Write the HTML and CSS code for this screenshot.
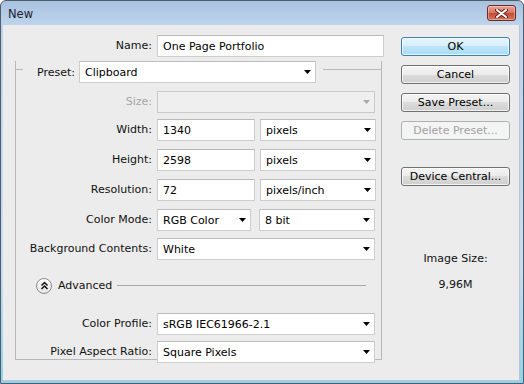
FILE: index.html
```html
<!DOCTYPE html>
<html>
<head>
    <title>New</title>
    <meta charset="UTF-8">
    <link rel="stylesheet" href="styles.css">
</head>
<body>
    <div class="window">
        <div class="titlebar">
            <span class="title">New</span>
            <span class="close">
                <svg width="13" height="9" viewBox="0 0 13 9">
                    <path d="M2 1 L11 8 M11 1 L2 8" stroke="#6b2418" stroke-width="4" stroke-linecap="round"/>
                    <path d="M2 1 L11 8 M11 1 L2 8" stroke="#fff" stroke-width="2" stroke-linecap="round"/>
                </svg>
            </span>
        </div>
        <div class="dialog">
            <div class="main">
                <div class="row name-row">
                    <label class="outer">Name:</label>
                    <input class="field name" type="text" value="One Page Portfolio">
                </div>
                <div class="group">
                    <div class="group-head">
                        <span class="rule short"></span>
                        <label>Preset:</label>
                        <div class="select preset"><span>Clipboard</span><i class="arrow"></i></div>
                        <span class="rule long"></span>
                    </div>
                    <div class="row r-size">
                        <label class="off">Size:</label>
                        <div class="select full disabled"><span></span><i class="arrow"></i></div>
                    </div>
                    <div class="row r-width">
                        <label>Width:</label>
                        <input class="field num" type="text" value="1340">
                        <div class="select unit"><span>pixels</span><i class="arrow"></i></div>
                    </div>
                    <div class="row r-height">
                        <label>Height:</label>
                        <input class="field num" type="text" value="2598">
                        <div class="select unit"><span>pixels</span><i class="arrow"></i></div>
                    </div>
                    <div class="row r-res">
                        <label>Resolution:</label>
                        <input class="field num" type="text" value="72">
                        <div class="select unit"><span>pixels/inch</span><i class="arrow"></i></div>
                    </div>
                    <div class="row r-mode">
                        <label>Color Mode:</label>
                        <div class="select mode"><span>RGB Color</span><i class="arrow"></i></div>
                        <div class="select unit"><span>8 bit</span><i class="arrow"></i></div>
                    </div>
                    <div class="row r-bg">
                        <label>Background Contents:</label>
                        <div class="select full"><span>White</span><i class="arrow"></i></div>
                    </div>
                    <div class="advanced">
                        <span class="toggle">
                            <svg width="9" height="9" viewBox="0 0 9 9">
                                <path d="M1.5 4.5 L4.5 1.5 L7.5 4.5 M1.5 8 L4.5 5 L7.5 8" fill="none" stroke="#111" stroke-width="1.5"/>
                            </svg>
                        </span>
                        <span class="adv-label">Advanced</span>
                        <span class="adv-rule"></span>
                    </div>
                    <div class="row r-profile">
                        <label>Color Profile:</label>
                        <div class="select full"><span>sRGB IEC61966-2.1</span><i class="arrow"></i></div>
                    </div>
                    <div class="row r-ratio">
                        <label>Pixel Aspect Ratio:</label>
                        <div class="select full"><span>Square Pixels</span><i class="arrow"></i></div>
                    </div>
                </div>
            </div>
            <div class="side">
                <button class="btn default">OK</button>
                <button class="btn">Cancel</button>
                <button class="btn">Save Preset...</button>
                <button class="btn" disabled>Delete Preset...</button>
                <button class="btn device">Device Central...</button>
                <div class="size-label">Image Size:</div>
                <div class="size-value">9,96M</div>
            </div>
        </div>
    </div>
</body>
</html>
```

FILE: styles.css
```css
body {
    margin: 0;
    font-family: "DejaVu Sans", sans-serif;
    font-size: 11px;
    color: #111;
}
.window {
    width: 524px;
    height: 384px;
    box-sizing: border-box;
    border: 1px solid #4e5d6c;
    border-radius: 6px 6px 0 0;
    background: linear-gradient(to bottom, #a9c2df, #bed4ec 24px, #c9dcef 70%, #8fd3ea);
    display: flex;
    flex-direction: column;
}
.titlebar {
    height: 24px;
    display: flex;
    justify-content: space-between;
    align-items: flex-start;
    padding: 0 7px 0 7px;
}
.title {
    font-size: 11.5px;
    line-height: 26px;
    color: #1b2532;
}
.close {
    margin-top: 4px;
    width: 27px;
    height: 14px;
    border: 1px solid #6f2a20;
    border-radius: 3px;
    background: linear-gradient(to bottom, #e9a899, #d5705d 50%, #c24a33 50%, #d6735c);
    box-shadow: inset 0 0 0 1px rgba(255, 255, 255, 0.35);
    display: flex;
    align-items: center;
    justify-content: center;
}
.dialog {
    flex: 1;
    margin: 0 3px 2px 2px;
    background: #ececec;
    border-right: 1px solid #b9c6d3;
    border-bottom: 1px solid #b9c6d3;
    display: flex;
    padding: 10px 0 0 12px;
}
.main {
    width: 369px;
}
.row {
    display: flex;
    align-items: center;
    height: 22px;
}
.row label {
    width: 136px;
    margin-right: 5px;
    text-align: right;
    line-height: 22px;
}
.row label.outer {
    width: 137px;
}
.row label.off {
    color: #a6a6a6;
}
.field {
    box-sizing: border-box;
    height: 22px;
    border: 1px solid #cdcdcd;
    border-top-color: #b9b9b9;
    background: #fff;
    font-family: "DejaVu Sans", sans-serif;
    font-size: 11px;
    color: #000;
    padding: 0 5px;
    margin: 0;
    outline: none;
}
.field.name {
    width: 227px;
}
.field.num {
    width: 98px;
    margin-right: 5px;
}
.select {
    box-sizing: border-box;
    height: 22px;
    border: 1px solid #cdcdcd;
    border-top-color: #bdbdbd;
    background: #fff;
    display: flex;
    align-items: center;
    justify-content: space-between;
    padding: 0 4px 0 5px;
    color: #000;
}
.select.full { width: 218px; }
.select.unit { width: 116px; }
.select.mode { width: 94px; margin-right: 8px; }
.select.preset { width: 237px; }
.select.disabled {
    background: #efefef;
    border-color: #c9c9c9;
}
.arrow {
    width: 7px;
    height: 4px;
    background: #000;
    clip-path: polygon(0 0, 100% 0, 50% 100%);
}
.select.disabled .arrow {
    background: #a9a9a9;
}
.group {
    width: 367px;
    height: 299px;
    box-sizing: border-box;
    margin-top: 12px;
    border: 1px solid #b8b8b8;
    border-top: none;
}
.group-head {
    display: flex;
    align-items: center;
    height: 22px;
    margin-top: -8px;
}
.rule {
    align-self: flex-start;
    margin-top: 8px;
    border-top: 1px solid #b8b8b8;
    height: 0;
}
.rule.short {
    width: 7px;
    margin-right: 14px;
}
.rule.long {
    flex: 1;
    margin-left: 7px;
}
.group-head label {
    margin-right: 4px;
}
.r-size { margin-top: 8px; }
.r-width { margin-top: 6px; }
.r-height,
.r-res,
.r-mode { margin-top: 8px; }
.r-bg { margin-top: 7px; }
.r-profile { margin-top: 20px; }
.r-ratio { margin-top: 6px; }
.advanced {
    display: flex;
    align-items: center;
    height: 15px;
    margin-top: 18px;
}
.toggle {
    box-sizing: border-box;
    width: 16px;
    height: 16px;
    margin-left: 20px;
    border: 1px solid #8c8c8c;
    border-radius: 50%;
    background: linear-gradient(to bottom, #ffffff, #e4e4e4);
    display: flex;
    align-items: center;
    justify-content: center;
}
.adv-label {
    margin-left: 6px;
}
.adv-rule {
    flex: 1;
    height: 0;
    border-top: 1px solid #a8a8a8;
    margin: 0 15px 0 5px;
}
.side {
    width: 109px;
    margin-left: 17px;
    padding-top: 2px;
    display: flex;
    flex-direction: column;
    align-items: center;
}
.btn {
    width: 109px;
    height: 19px;
    margin: 0 0 9px 0;
    padding: 0;
    border: 1px solid #707070;
    border-radius: 3px;
    background: linear-gradient(to bottom, #f4f4f4, #ebebeb 50%, #dcdcdc 50%, #cfcfcf);
    box-shadow: inset 0 0 0 1px rgba(255, 255, 255, 0.7);
    font-family: "DejaVu Sans", sans-serif;
    font-size: 11px;
    color: #000;
}
.btn.default {
    border-color: #3c7fb1;
    background: linear-gradient(to bottom, #e6f5fd, #d6eefb 50%, #bde4f8 50%, #a9dbf6);
}
.btn:disabled {
    border-color: #adb2b5;
    background: #f4f4f4;
    color: #a3a3a3;
    box-shadow: none;
}
.btn.device {
    margin-top: 18px;
}
.size-label {
    margin-top: 57px;
    line-height: 14px;
}
.size-value {
    margin-top: 12px;
    line-height: 14px;
}
```
